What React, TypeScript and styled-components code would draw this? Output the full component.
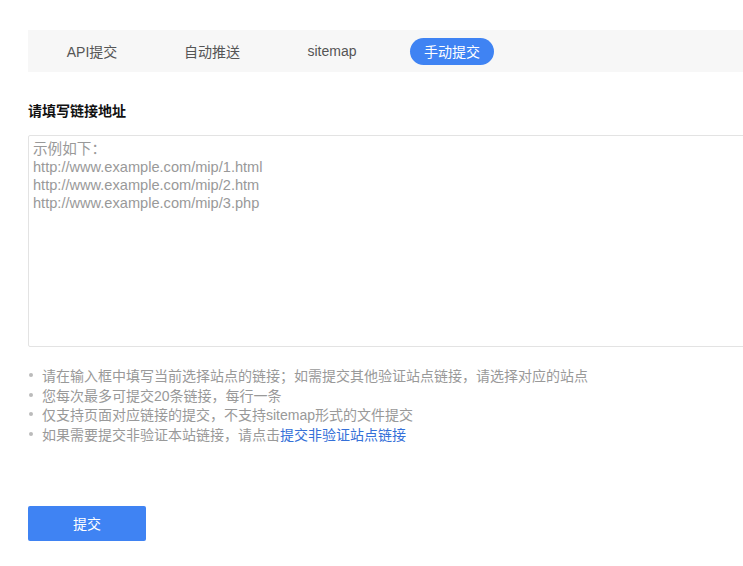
import React from "react";
import styled, { createGlobalStyle } from "styled-components";

const Global = createGlobalStyle`
  html, body { margin: 0; padding: 0; background: #fff; overflow: hidden; }
  body { font-family: "Liberation Sans", Arial, "Noto Sans CJK SC", sans-serif; }
`;

const Page = styled.div`
  width: 820px;
  padding: 30px 0 0 28px;
  box-sizing: border-box;
`;

const TabBar = styled.div`
  display: grid;
  grid-template-columns: repeat(4, 120px);
  align-items: center;
  height: 42px;
  padding-left: 4px;
  background: #f7f7f7;
`;

const Tab = styled.div<{ $active?: boolean }>`
  justify-self: center;
  display: flex;
  align-items: center;
  justify-content: center;
  height: 27px;
  padding: 0 ${(p) => (p.$active ? "14px" : "0")};
  border-radius: 14px;
  font-size: 14px;
  color: ${(p) => (p.$active ? "#fff" : "#555")};
  background: ${(p) => (p.$active ? "#3f83f3" : "transparent")};
`;

const Heading = styled.h3`
  margin: 30px 0 15px;
  font-size: 14px;
  line-height: 18px;
  font-weight: bold;
  color: #111;
`;

const Input = styled.textarea`
  display: block;
  width: 100%;
  height: 212px;
  box-sizing: border-box;
  padding: 4px 4px;
  border: 1px solid #e3e3e3;
  border-radius: 2px;
  resize: none;
  outline: none;
  font-family: "Liberation Sans", Arial, "Noto Sans CJK SC", sans-serif;
  font-size: 14.6px;
  line-height: 18px;
  color: #333;
  &::placeholder { color: #999; }
`;

const Notes = styled.ul`
  list-style: none;
  margin: 18px 0 0;
  padding: 0;
`;

const Note = styled.li`
  display: flex;
  align-items: center;
  gap: 9px;
  height: 19.7px;
  font-size: 14px;
  color: #999;
  &::before {
    content: "";
    flex: none;
    width: 4px;
    height: 4px;
    margin-left: 1px;
    border-radius: 50%;
    background: #bbb;
  }
`;

const Link = styled.a`
  color: #3570d8;
  text-decoration: none;
`;

const Submit = styled.button`
  display: block;
  margin-top: 62px;
  width: 118px;
  height: 35px;
  border: none;
  border-radius: 2px;
  background: #3f83f3;
  color: #fff;
  font-size: 14px;
  font-family: "Liberation Sans", Arial, "Noto Sans CJK SC", sans-serif;
`;

export default function App() {
  return (
    <Page>
      <Global />
      <TabBar>
        <Tab>API提交</Tab>
        <Tab>自动推送</Tab>
        <Tab>sitemap</Tab>
        <Tab $active>手动提交</Tab>
      </TabBar>
      <Heading>请填写链接地址</Heading>
      <Input
        placeholder={
          "示例如下：\nhttp://www.example.com/mip/1.html\nhttp://www.example.com/mip/2.htm\nhttp://www.example.com/mip/3.php"
        }
      />
      <Notes>
        <Note>请在输入框中填写当前选择站点的链接；如需提交其他验证站点链接，请选择对应的站点</Note>
        <Note>您每次最多可提交20条链接，每行一条</Note>
        <Note>仅支持页面对应链接的提交，不支持sitemap形式的文件提交</Note>
        <Note>
          <span>
            如果需要提交非验证本站链接，请点击<Link href="#">提交非验证站点链接</Link>
          </span>
        </Note>
      </Notes>
      <Submit>提交</Submit>
    </Page>
  );
}
